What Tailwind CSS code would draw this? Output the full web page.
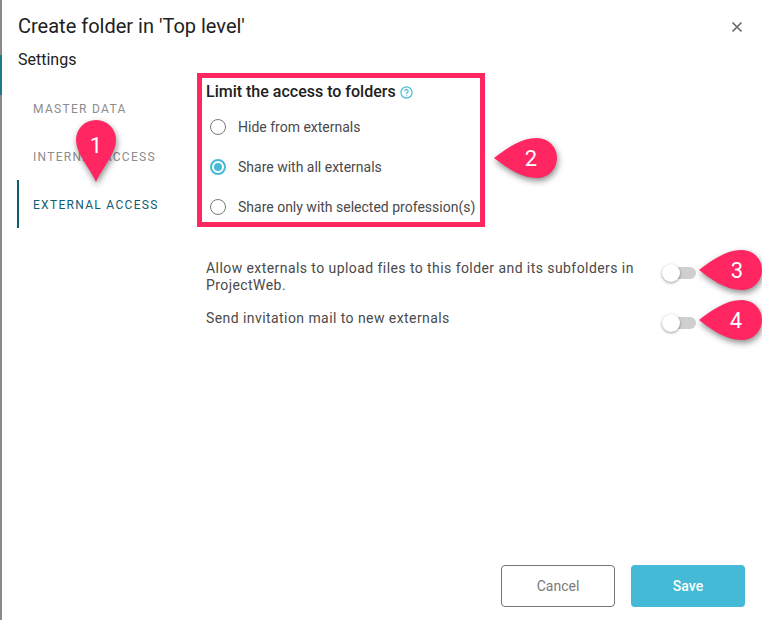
<!DOCTYPE html>
<html lang="en">
<head>
    <meta charset="UTF-8">
    <title>Create folder</title>
    <script src="https://cdn.jsdelivr.net/npm/@tailwindcss/browser@4"></script>
</head>
<body class="bg-white">
    <div class="relative flex flex-col w-[762px] h-[620px] overflow-hidden bg-white font-['Roboto',sans-serif] text-[#212121]">
        <!-- Page behind the dialog -->
        <div class="absolute left-0 top-0 w-[2px] h-full bg-[#8a8a8a]"></div>
        <div class="absolute left-0 top-[55px] w-[2px] h-[40px] bg-[#1f7a85]"></div>

        <!-- Header -->
        <header class="flex items-center justify-between h-[28px] mt-[12px] pl-[18px] pr-[19px] shrink-0">
            <h1 class="text-[20px] leading-[28px]">Create folder in 'Top level'</h1>
            <svg class="w-[12px] h-[12px] mt-[2px]" viewBox="0 0 12 12" fill="none" stroke="#6b6b6b" stroke-width="1.7"><path d="M1.5 1.5l9 9M10.5 1.5l-9 9"/></svg>
        </header>
        <div class="h-[20px] mt-[10px] pl-[18px] text-[16px] leading-[20px] shrink-0">Settings</div>

        <div class="flex flex-1 mt-[3px] pl-[17px]">
            <!-- Side nav -->
            <nav class="flex flex-col w-[180px] pt-[12px] text-[12px] tracking-[1.3px] shrink-0">
                <a class="flex items-center h-[48px] pl-[16px] text-[#8c8c8c]">MASTER DATA</a>
                <a class="flex items-center h-[48px] pl-[16px] text-[#8c8c8c]">INTERNAL ACCESS</a>
                <a class="flex items-center h-[48px] pl-[14px] pt-[2px] border-l-2 border-[#0f5c75] text-[#0f5c75] -mt-px">EXTERNAL ACCESS</a>
            </nav>

            <!-- External access form -->
            <main class="flex flex-col flex-1">
                <section class="w-[288px] h-[154px] border-[5px] border-[#ff2661] pl-[4px]">
                    <div class="flex items-center gap-[4px] h-[26px] pt-[2px] text-[16px] font-medium">
                        Limit the access to folders
                        <svg class="w-[13px] h-[13px] mt-[1px]" viewBox="0 0 13 13" fill="none" stroke="#45bad6" stroke-width="1.2"><circle cx="6.5" cy="6.5" r="5.6"/><path d="M4.8 5.2a1.7 1.7 0 1 1 2.6 1.4c-.6.4-.9.7-.9 1.4M6.5 9.2v.9"/></svg>
                    </div>
                    <div class="flex flex-col gap-[10px] mt-[8px] text-[14px] text-[#4a4a4a] whitespace-nowrap">
                        <label class="flex items-center gap-[12px] h-[30px] pl-[4px]">
                            <span class="w-[16px] h-[16px] rounded-full border-[1.5px] border-[#7a7a7a]"></span>
                            Hide from externals
                        </label>
                        <label class="flex items-center gap-[12px] h-[30px] pl-[4px]">
                            <span class="flex items-center justify-center w-[16px] h-[16px] rounded-full border-2 border-[#45bad6]"><span class="w-[8px] h-[8px] rounded-full bg-[#45bad6]"></span></span>
                            Share with all externals
                        </label>
                        <label class="flex items-center gap-[12px] h-[30px] pl-[4px]">
                            <span class="w-[16px] h-[16px] rounded-full border-[1.5px] border-[#7a7a7a]"></span>
                            Share only with selected profession(s)
                        </label>
                    </div>
                </section>

                <div class="flex flex-col gap-[16px] mt-[33px] pl-[9px] text-[14px] leading-[17px] text-[#4a4a4a] tracking-[0.43px]">
                    <div class="flex items-start">
                        <p class="w-[456px]">Allow externals to upload files to this folder and its subfolders in ProjectWeb.</p>
                        <span class="relative block w-[34px] h-[12px] mt-[7px] shrink-0">
                            <span class="absolute left-[8px] right-0 top-0 h-[12px] rounded-full bg-[#cfcfcf]"></span>
                            <span class="absolute left-0 top-[-3px] w-[18px] h-[18px] rounded-full bg-white shadow-[0_1px_3px_rgba(0,0,0,0.4)]"></span>
                        </span>
                    </div>
                    <div class="flex items-start">
                        <p class="w-[456px]">Send invitation mail to new externals</p>
                        <span class="relative block w-[34px] h-[12px] mt-[7px] shrink-0">
                            <span class="absolute left-[8px] right-0 top-0 h-[12px] rounded-full bg-[#cfcfcf]"></span>
                            <span class="absolute left-0 top-[-3px] w-[18px] h-[18px] rounded-full bg-white shadow-[0_1px_3px_rgba(0,0,0,0.4)]"></span>
                        </span>
                    </div>
                </div>
            </main>
        </div>

        <!-- Footer -->
        <footer class="flex justify-end gap-[16px] pr-[17px] pb-[13px] shrink-0">
            <button class="w-[114px] h-[42px] rounded-[4px] border border-[#757575] text-[14px] text-[#7a7a7a]">Cancel</button>
            <button class="w-[114px] h-[42px] rounded-[4px] bg-[#45bad6] text-[14px] font-medium text-white">Save</button>
        </footer>

        <!-- Annotation pins -->
        <div class="absolute left-[76px] top-[120px] w-[40px] h-[62px]">
            <svg class="absolute inset-0 drop-shadow-[1px_3px_3px_rgba(0,0,0,0.45)]" width="40" height="62" viewBox="0 0 40 62" fill="#ff2661"><path d="M20 62C14 48 0 34 0 20A20 20 0 0 1 40 20C40 34 26 48 20 62Z"/></svg>
            <span class="absolute left-0 top-[12px] w-[40px] text-center text-[22px] leading-[28px] text-white">1</span>
        </div>
        <div class="absolute left-[494px] top-[138px] w-[63px] h-[40px]">
            <svg class="absolute inset-0 drop-shadow-[1px_3px_3px_rgba(0,0,0,0.45)]" width="63" height="40" viewBox="0 0 63 40" fill="#ff2661"><path d="M0 20C12 11 26 0 43 0A20 20 0 0 1 43 40C26 40 12 29 0 20Z"/></svg>
            <span class="absolute left-[17px] top-[7px] w-[40px] text-center text-[22px] leading-[28px] text-white">2</span>
        </div>
        <div class="absolute left-[699px] top-[250px] w-[63px] h-[40px]">
            <svg class="absolute inset-0 drop-shadow-[1px_3px_3px_rgba(0,0,0,0.45)]" width="63" height="40" viewBox="0 0 63 40" fill="#ff2661"><path d="M0 20C12 11 26 0 43 0A20 20 0 0 1 43 40C26 40 12 29 0 20Z"/></svg>
            <span class="absolute left-[18px] top-[7px] w-[40px] text-center text-[22px] leading-[28px] text-white">3</span>
        </div>
        <div class="absolute left-[699px] top-[300px] w-[63px] h-[40px]">
            <svg class="absolute inset-0 drop-shadow-[1px_3px_3px_rgba(0,0,0,0.45)]" width="63" height="40" viewBox="0 0 63 40" fill="#ff2661"><path d="M0 20C12 11 26 0 43 0A20 20 0 0 1 43 40C26 40 12 29 0 20Z"/></svg>
            <span class="absolute left-[17px] top-[7px] w-[40px] text-center text-[22px] leading-[28px] text-white">4</span>
        </div>
    </div>
</body>
</html>
